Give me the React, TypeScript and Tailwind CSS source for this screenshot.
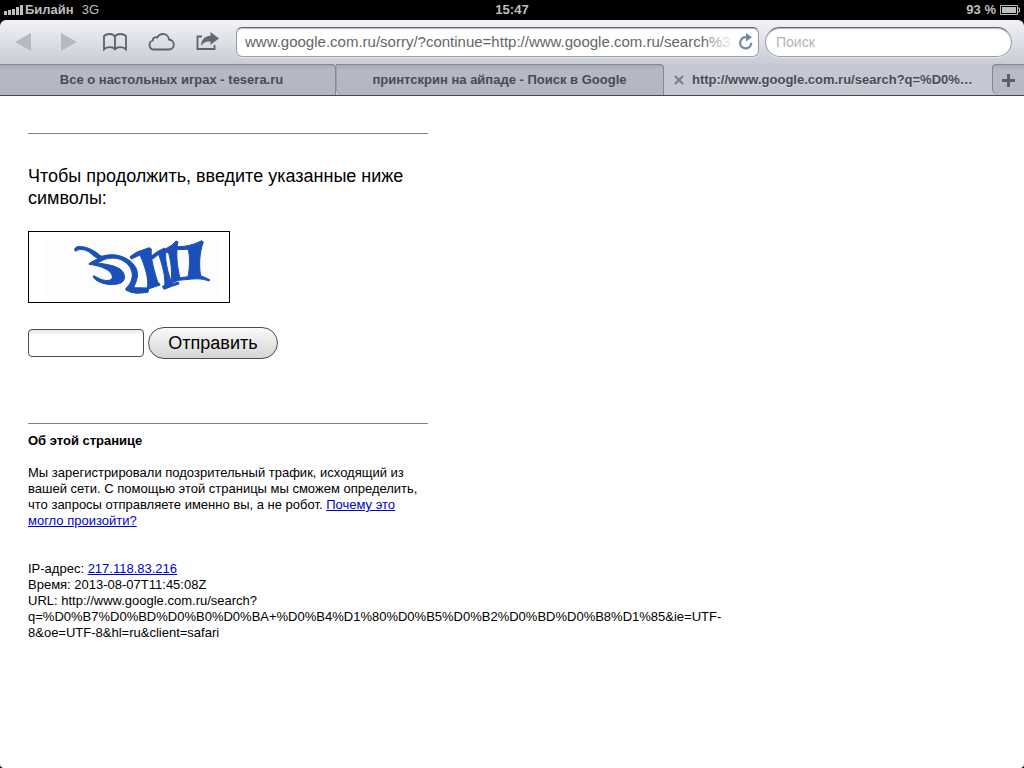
import { useState } from "react";

const currentUrl = "www.google.com.ru/sorry/?continue=http://www.google.com.ru/search%3Fq%3D";
const tabs = ["Все о настольных играх - tesera.ru", "принтскрин на айпаде - Поиск в Google"];

function StatusBar() {
    return (
        <div className="grid h-5 grid-cols-3 items-center bg-black px-1 text-[13px] font-bold text-[#bfbfbf]">
            <div className="flex items-center">
                <svg width="20" height="10" viewBox="0 0 20 10" fill="#bfbfbf">
                    <path d="M0 6h3v4H0zM4 5h3v5H4zM8 4h3v6H8zM12 2h3v8h-3zM16 0h3v10h-3z" />
                </svg>
                <span className="ml-px">Билайн</span>
                <span className="ml-2 font-normal">3G</span>
            </div>
            <div className="text-center">15:47</div>
            <div className="flex items-center justify-end gap-1">
                <span>93 %</span>
                <svg width="20" height="10" viewBox="0 0 20 10">
                    <path d="M.5.5h17v9H.5zM18 3h1.500v4H18" fill="none" stroke="#bfbfbf" />
                    <path d="M2 2h14v6H2z" fill="#bfbfbf" />
                </svg>
            </div>
        </div>
    );
}

function Toolbar() {
    const [url, setUrl] = useState(currentUrl);
    const [search, setSearch] = useState("");

    return (
        <div className="flex h-11 items-center rounded-t-md bg-linear-to-b from-[#f3f3f7] to-[#c9ccd6] pr-3">
            <div className="mr-1.5 flex">
                <button aria-label="Назад" className="flex h-11 w-[46px] items-center justify-center">
                    <svg width="16" height="18" viewBox="0 0 16 18" fill="#b6b9c3">
                        <path d="M16 0v18L0 9z" />
                    </svg>
                </button>
                <button aria-label="Вперёд" className="flex h-11 w-[46px] items-center justify-center">
                    <svg width="16" height="18" viewBox="0 0 16 18" fill="#b6b9c3">
                        <path d="M0 0v18l16-9z" />
                    </svg>
                </button>
                <button aria-label="Закладки" className="flex h-11 w-[46px] items-center justify-center">
                    <svg width="26" height="18" viewBox="0 0 26 18" fill="none" stroke="#5d626d" strokeWidth="1.8">
                        <path d="M13 3.500C11.800 1.700 10 1 7.700 1 5.200 1 3.300 1.700 2 3v13.500C4.500 13.500 10.500 13.300 13 16.300c2.500-3 8.500-2.800 11 .2V3c-1.300-1.300-3.200-2-5.700-2-2.300 0-4.100.7-5.300 2.500zM13 3.500v13" />
                    </svg>
                </button>
                <button aria-label="iCloud" className="flex h-11 w-[46px] items-center justify-center">
                    <svg width="27" height="18" viewBox="0 0 27 18" fill="none" stroke="#5d626d" strokeWidth="1.8">
                        <path d="M6 16.500a4.600 4.600 0 0 1-1.200-9C4.600 4.600 7.300 3.600 9.200 4.600 10.800 1.800 13.200 1 15 1c3.300 0 5.700 2.400 5.900 5.500 2.700.2 4.900 2.400 4.900 5.100 0 2.900-2.200 4.900-5 4.900z" />
                    </svg>
                </button>
                <button aria-label="Поделиться" className="flex h-11 w-[46px] items-center justify-center">
                    <svg width="24" height="20" viewBox="0 0 24 20">
                        <path d="M7 4.500H2.500V17h17v-4" fill="none" stroke="#5d626d" strokeWidth="1.8" />
                        <path d="M15.500 0L24 6.500l-8.500 6.200V9.500C11 9.200 8.500 10.500 6 14 6 8 9.500 4 15.500 3.700z" fill="#636975" />
                    </svg>
                </button>
            </div>
            <div className="relative mr-1.5 flex h-[30px] min-w-0 flex-1 items-center rounded-md border border-[#9a9da6] border-t-[#5f6269] bg-white pr-1 pl-2 shadow-[inset_0_1px_1px_#bbbbbb,0_1px_0_#e6e8ee]">
                <input
                    type="text"
                    aria-label="Адрес"
                    value={url}
                    onChange={(e) => setUrl(e.target.value)}
                    className="min-w-0 flex-1 bg-transparent text-[15px] text-[#666666] outline-none"
                />
                <div className="pointer-events-none absolute inset-y-1 right-6 w-8 bg-linear-to-r from-white/0 to-white" />
                <button aria-label="Обновить" className="ml-1.5">
                    <svg width="16" height="18" viewBox="0 0 16 18">
                        <path d="M9.500 4.200H7.500a5.600 5.600 0 1 0 5.800 5.600" fill="none" stroke="#7387a5" strokeWidth="2.2" />
                        <path d="M8 0l6 4.200-6 4.200z" fill="#7387a5" />
                    </svg>
                </button>
            </div>
            <input
                type="search"
                aria-label="Поиск"
                placeholder="Поиск"
                value={search}
                onChange={(e) => setSearch(e.target.value)}
                className="h-[30px] w-[247px] appearance-none rounded-full border border-[#9a9da6] border-t-[#5f6269] bg-white px-2.5 text-sm shadow-[inset_0_1px_1px_#bbbbbb,0_1px_0_#e6e8ee] outline-none placeholder:text-[#b3b3b3]"
            />
        </div>
    );
}

function TabBar() {
    return (
        <div className="flex h-8 border-b border-[#45474d] bg-[#c5c8d2] text-[13px] font-bold text-[#474b55] [text-shadow:0_1px_0_#d8dae1]">
            <div className="grid min-w-0 flex-1 grid-cols-[336fr_328fr_328fr]">
                {tabs.map((tab) => (
                    <button
                        key={tab}
                        className="min-w-0 truncate rounded-tr-sm rounded-bl-md border-t border-r border-[#858892] bg-linear-to-b from-[#a9acb7] via-[#b6b9c4] via-20% to-[#b3b6c1] px-2 shadow-[inset_1px_0_0_#9b9ea8] first:rounded-bl-none first:pl-4 first:shadow-none"
                    >
                        {tab}
                    </button>
                ))}
                <div className="flex min-w-0 items-center gap-2 pl-2.5">
                    <button aria-label="Закрыть вкладку">
                        <svg width="10" height="10" viewBox="0 0 10 10" stroke="#7b7e87" strokeWidth="2">
                            <path d="M1 1l8 8M9 1L1 9" />
                        </svg>
                    </button>
                    <span className="truncate">http://www.google.com.ru/search?q=%D0%…</span>
                </div>
            </div>
            <button
                aria-label="Новая вкладка"
                className="flex w-8 items-center justify-center rounded-tl-sm rounded-bl-md border-t border-l border-[#858892] bg-linear-to-b from-[#a9acb7] via-[#b9bcc6] via-20% to-[#b6b9c4]"
            >
                <svg width="13" height="13" viewBox="0 0 13 13" stroke="#5b5f69" strokeWidth="3">
                    <path d="M6.500 0v13M0 6.500h13" />
                </svg>
            </button>
        </div>
    );
}

function Captcha() {
    return (
        <svg role="img" aria-label="Символы" width="202" height="72" viewBox="-93 -9 600 210" className="border border-black">
            <path d="M-43 16h528v170H-43z" fill="#fdfdfd" />
            <g fill="#1c4fb8" stroke="#1c4fb8" strokeWidth="3" strokeLinejoin="round">
                <g transform="translate(30 3)">
                    <path d="M18 46C12 44 12 35 22 32C44 29 68 41 84 53C90 58 94 61 98 60C126 52 154 57 175 71C196 85 205 104 202 123C200 137 193 147 191 157L236 157L234 168C212 172 192 170 170 164C166 162 166 158 172 153C183 141 189 124 186 110C182 87 161 70 137 67C121 65 108 68 98 73C92 77 86 79 80 81C115 85 142 90 156 104C166 115 166 131 156 139C138 150 102 147 81 134C72 128 67 121 71 119C77 120 86 129 100 132C115 136 128 132 127 122C125 103 96 90 57 85C56 80 70 77 84 67C68 62 62 46 44 42C32 39 23 40 18 46z" />
                </g>
                <g transform="translate(210 3)">
                    <path d="M0 155L53 156L88 142L90 147L57 158L52 169L20 172L0 168z" />
                    <path d="M0 62L21 48L58 35L64 39C61 60 72 108 86 145L52 158C57 126 45 92 30 57L4 69z" />
                    <path d="M63 61L82 47L104 36L108 42C103 69 114 112 126 143L104 152C107 121 98 91 86 55L68 69z" />
                    <path d="M101 42L125 28L138 15L144 18C137 47 141 93 151 130L122 141C128 111 123 77 115 48L103 52z" />
                    <path d="M137 32C163 33 190 27 215 14L220 18C209 48 206 86 212 119C221 123 231 126 240 132L236 135C217 127 195 128 177 130L145 133L126 139V132L151 125L174 122C180 93 180 64 175 40L138 41z" />
                    <path d="M97 151L145 138L147 144L128 150L102 160z" />
                </g>
            </g>
        </svg>
    );
}

export default function App() {
    const [answer, setAnswer] = useState("");

    return (
        <div className="flex min-h-screen flex-col bg-black font-['Liberation_Sans',Arial,sans-serif]">
            <StatusBar />
            <Toolbar />
            <TabBar />

            <main className="flex-1 rounded-b-sm bg-white px-7 pt-[37px] pb-8 text-[13px] leading-4 text-black">
                <div className="max-w-[400px]">
                    <hr className="border-[#808080]" />
                    <form onSubmit={(e) => e.preventDefault()}>
                        <label htmlFor="answer" className="mt-[31px] block text-lg leading-[22px]">
                            Чтобы продолжить, введите указанные ниже символы:
                        </label>
                        <div className="mt-[22px]">
                            <Captcha />
                        </div>
                        <div className="mt-6 flex items-center gap-1">
                            <input
                                id="answer"
                                type="text"
                                value={answer}
                                onChange={(e) => setAnswer(e.target.value)}
                                className="h-7 w-29 rounded border border-[#4c4c4c] bg-linear-to-b from-[#e6e6e6] to-white to-20% px-1 text-lg"
                            />
                            <button
                                type="submit"
                                className="h-8 w-[130px] rounded-full border border-[#4c4c4c] bg-linear-to-b from-[#fafafa] to-[#d5d5d5] text-lg leading-none"
                            >
                                Отправить
                            </button>
                        </div>
                    </form>

                    <hr className="mt-16 border-[#808080]" />
                    <h2 className="mt-[9px] font-bold">Об этой странице</h2>
                    <p className="mt-4">
                        Мы зарегистрировали подозрительный трафик, исходящий из вашей сети. С помощью этой страницы мы сможем
                        определить, что запросы отправляете именно вы, а не робот.{" "}
                        <a href="#why" className="text-[#0000cc] underline">
                            Почему это могло произойти?
                        </a>
                    </p>
                </div>

                {/* Сведения о запросе */}
                <div className="mt-8 max-w-[700px]">
                    <div>
                        IP-адрес:{" "}
                        <a href="#ip" className="text-[#0000cc] underline">
                            217.118.83.216
                        </a>
                    </div>
                    <div>Время: 2013-08-07T11:45:08Z</div>
                    <div>
                        URL: http://www.google.com.ru/search?
                        <br />
                        q=%D0%B7%D0%BD%D0%B0%D0%BA+%D0%B4%D1%80%D0%B5%D0%B2%D0%BD%D0%B8%D1%85&amp;ie=UTF-8&amp;oe=UTF-8&amp;hl=ru&amp;client=safari
                    </div>
                </div>
            </main>
        </div>
    );
}
